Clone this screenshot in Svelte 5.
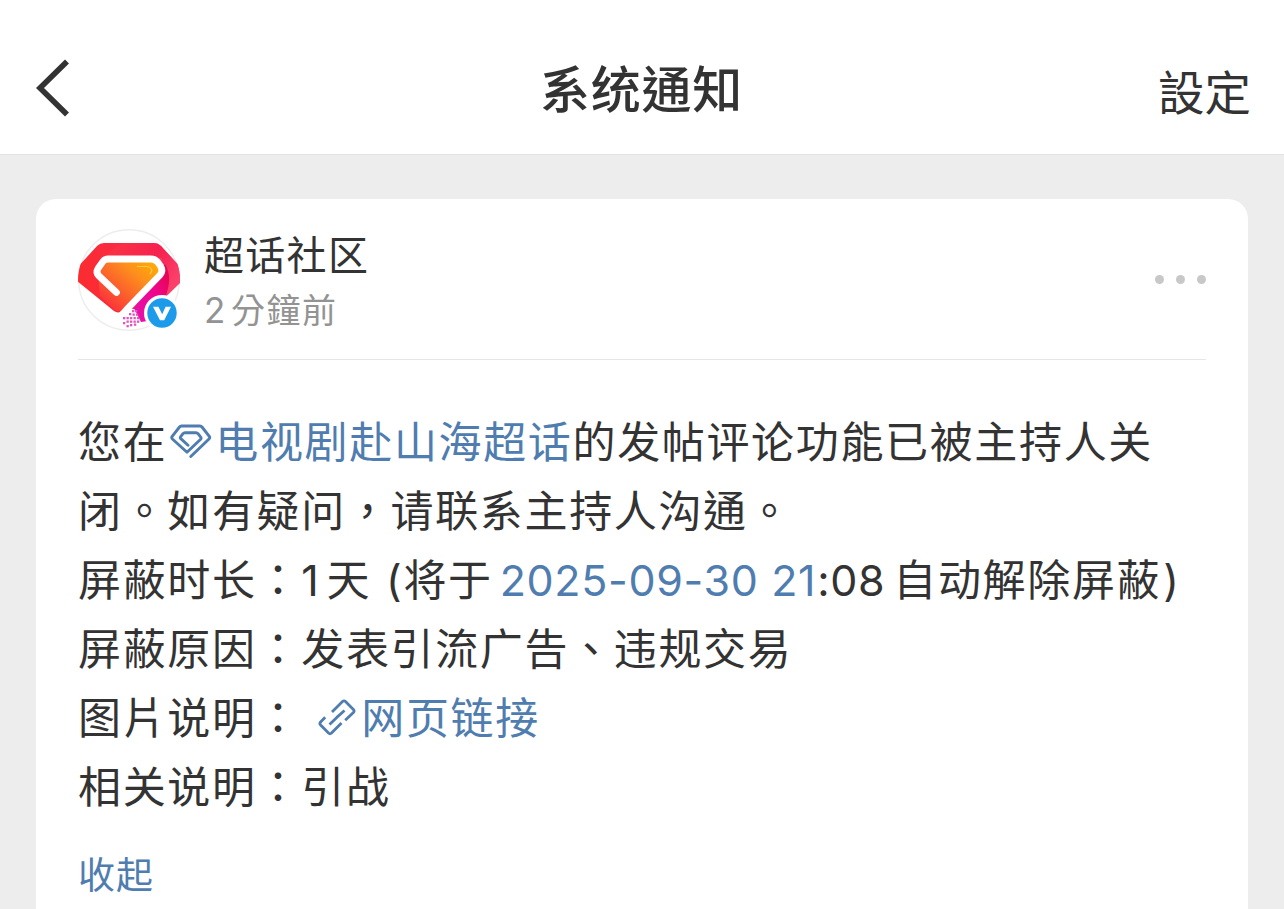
<script>
    const title = "系统通知";
    const account = { name: "超话社区", minutes: 2 };

    let expanded = true;

    // little squares where the logo dissolves at the bottom
    const pixels = [
        [62, 90], [65, 90], [59, 93], [62.5, 93.5], [66, 93.5],
        [53, 97], [56.5, 97], [60, 97], [63.5, 97], [67, 97],
        [56.5, 100.5], [60, 100.5], [63.5, 100.5], [67, 100.5],
        [53, 102], [60, 104], [64, 103.500], [56.5, 105]
    ];
</script>

<header>
    <button class="back" aria-label="back">
        <svg width="36" height="60" viewBox="0 0 36 60">
            <path d="M33 3.5 L6 30 L33 56.5" fill="none" stroke="#333" stroke-width="5.6" />
        </svg>
    </button>
    <h1>{title}</h1>
    <button class="settings">設定</button>
</header>

<main>
    <article class="card">
        <div class="author">
            <div class="avatar">
                <svg width="102" height="102" viewBox="8 9 102 102">
                    <defs>
                        <clipPath id="round"><circle cx="59" cy="60" r="51" /></clipPath>
                        <linearGradient id="red" x1="0" y1="0.6" x2="1" y2="0.4">
                            <stop offset="0" stop-color="#fb2c2c" />
                            <stop offset="0.5" stop-color="#f92a44" />
                            <stop offset="1" stop-color="#fb4169" />
                        </linearGradient>
                        <linearGradient id="wing" x1="0" y1="0" x2="1" y2="0.5">
                            <stop offset="0" stop-color="#fb3543" />
                            <stop offset="0.6" stop-color="#f5214f" />
                            <stop offset="1" stop-color="#fb416b" />
                        </linearGradient>
                        <linearGradient id="gem" x1="1" y1="0" x2="0.15" y2="0.8">
                            <stop offset="0" stop-color="#ffb400" />
                            <stop offset="0.4" stop-color="#fd8f1c" />
                            <stop offset="1" stop-color="#fb3b38" />
                        </linearGradient>
                        <linearGradient id="pink" x1="1" y1="0" x2="0" y2="1">
                            <stop offset="0" stop-color="#e2063f" />
                            <stop offset="0.45" stop-color="#f0068c" />
                            <stop offset="1" stop-color="#e313b0" />
                        </linearGradient>
                    </defs>
                    <circle cx="59" cy="60" r="50.3" fill="#fff" stroke="#ededed" stroke-width="1.4" />
                    <g clip-path="url(#round)">
                        <path d="M27 26 Q30 23 34 23 H84 Q88 23 91 26 L113 50 V60 L80 92 L58 88 Q49 95 44 91 L6 60 V49 Z" fill="url(#red)" />
                        <path d="M37 36 C43 26 54 23 64 23 H84 Q88 23 91 26 L113 50 V60 L92 80 V38 Z" fill="url(#wing)" />
                        <path d="M95 44 C101 54 100 65 95 78 L78 101 L71 102 L64 88 Z" fill="url(#pink)" />
                        <path d="M38 41 H82 L91 51 L55 89 Q50 93 45 90 L30 76 L28 54 Z" fill="url(#gem)" />
                        <path d="M46.5 72.5 L29 56 Q25.5 52.5 28 48.5 L33 41.5 Q35 39 38 39 H81 Q85 39 87.5 42 L90.5 46 Q93.5 51 90 55 L58 88 Q55 92 50 96.5" fill="none" stroke="#fff" stroke-width="6.8" stroke-linecap="round" stroke-linejoin="round" />
                        <path d="M67 46.5 H77 Q80 46.5 81.5 49 Q82.5 51 80 54" fill="none" stroke="#ffd34d" stroke-width="1.2" opacity="0.8" />
                        {#each pixels as [x, y]}
                            <rect {x} {y} width="2.3" height="2.3" fill="#e653bf" />
                        {/each}
                    </g>
                </svg>
                <svg class="badge" width="36" height="36" viewBox="0 0 36 36">
                    <circle cx="18" cy="18" r="18" fill="#fff" />
                    <circle cx="18" cy="18" r="14.7" fill="#1c9bea" />
                    <path d="M9 11.8 H14.4 L18.2 19.2 L21.6 11.8 H27 L20.2 25.2 H16 Z" fill="#fff" />
                </svg>
            </div>
            <div class="info">
                <div class="name">{account.name}</div>
                <div class="time"><span class="num">{account.minutes}</span>分鐘前</div>
            </div>
            <button class="more" aria-label="more"><i></i><i></i><i></i></button>
        </div>

        <div class="content">
            <p>您在<a href="#topic"><svg class="gem" width="42" height="36" viewBox="0 0 42 36">
                <path
                    d="M20.8 32.5 L39 15 Q40.3 13.7 39.3 12.3 L32 3 Q31.200 2 30 2 H11.5 Q10.300 2 9.500 3 L2.200 12.300 Q1.200 13.700 2.400 15 L17 28.300 L30.600 15.300 Q31.500 14.300 30.700 13.200 L28 9.700 Q27.200 8.700 26 8.700 H15 Q13.800 8.700 13 9.700 L10.700 12.700 Q9.900 13.700 10.800 14.600 L18 21.300"
                    fill="none" stroke="#507daf" stroke-width="2.9" stroke-linejoin="round" stroke-linecap="round"
                />
            </svg>电视剧赴山海超话</a>的发帖评论功能已被主持人关</p>
            <p>闭。如有疑问，请联系主持人沟通。</p>
            <p>屏蔽时长：<span class="num one">1</span>天<span class="num open">(</span>将于<a class="num date" href="#date">2025-09-30 21</a><span class="num clock">:08</span>自动解除屏蔽<span class="num close">)</span></p>
            <p>屏蔽原因：发表引流广告、违规交易</p>
            <p>图片说明：<a class="link" href="#page"><svg class="chain" width="38" height="38" viewBox="0 0 38 38">
                <g fill="none" stroke="#507daf" stroke-width="2.8" stroke-linejoin="round">
                    <path d="M7.2 18.3 L2.6 23 Q1.2 24.5 2.6 26 L10.5 34 Q12 35.4 13.5 34 L23.5 24" />
                    <path d="M14 13 L24.5 2.6 Q26 1.2 27.5 2.6 L35.4 10.5 Q36.8 12 35.4 13.5 L27.2 21.3" />
                    <path d="M11.5 25.5 L18.8 18.5 M18.5 18.6 L26.5 11.5" />
                </g>
            </svg>网页链接</a></p>
            <p>相关说明：引战</p>
        </div>

        <button class="toggle" on:click={() => (expanded = !expanded)}>{expanded ? "收起" : "展開"}</button>
    </article>
</main>

<style>
    :global(body) {
        background: #ededed;
        overflow: hidden;
        font-family: "Noto Sans CJK TC", sans-serif;
        color: #333;
    }

    button {
        padding: 0;
        border: none;
        background: none;
        font-family: inherit;
        color: inherit;
        cursor: pointer;
    }

    a {
        color: #507daf;
        text-decoration: none;
    }

    svg {
        display: block;
    }

    header {
        box-sizing: border-box;
        height: 155px;
        padding: 22px 33px 0 34px;
        display: grid;
        grid-template-columns: 1fr auto 1fr;
        align-items: center;
        background: #fff;
        border-bottom: 1px solid #e3e3e3;
    }

    .back {
        justify-self: start;
    }

    h1 {
        margin: -4px 2px 0 0;
        font-size: 50px;
        font-weight: 500;
        letter-spacing: 0.8px;
        line-height: 70px;
    }

    .settings {
        justify-self: end;
        font-size: 46.5px;
        line-height: 70px;
        padding-top: 3px;
    }

    main {
        padding: 44px 36px 0;
    }

    .card {
        box-sizing: border-box;
        height: 730px;
        padding: 0 42px;
        background: #fff;
        border-radius: 20px;
    }

    .author {
        box-sizing: border-box;
        height: 161px;
        padding-top: 30px;
        display: flex;
        align-items: flex-start;
        border-bottom: 1px solid #e6e6e6;
    }

    .avatar {
        position: relative;
        width: 102px;
        height: 102px;
    }

    .badge {
        position: absolute;
        left: 66px;
        top: 66px;
    }

    .info {
        flex: 1;
        margin-top: -3px;
        padding-left: 24px;
    }

    .name {
        font-size: 40px;
        letter-spacing: 1.3px;
        line-height: 54px;
    }

    .time {
        padding-top: 2px;
        font-size: 34px;
        letter-spacing: 1.5px;
        line-height: 54px;
        color: #939393;
    }

    .time .num {
        margin-right: 5px;
        font-size: 35px;
    }

    .more {
        display: flex;
        gap: 12px;
        padding-top: 46px;
    }

    .more i {
        width: 9px;
        height: 9px;
        border-radius: 50%;
        background: #c8c8c8;
    }

    .content {
        padding-top: 45px;
        font-size: 43px;
        letter-spacing: 1.65px;
    }

    p {
        margin: 0;
        height: 69px;
        line-height: 69px;
        white-space: nowrap;
    }

    .num {
        font-family: Inter, sans-serif;
        line-height: 1;
        letter-spacing: 0.65px;
    }

    .gem {
        display: inline-block;
        margin: 0 3px;
        vertical-align: -2px;
    }

    .link {
        margin-left: 17px;
    }

    .chain {
        display: inline-block;
        margin: 0 5px 0 0;
        vertical-align: -3px;
    }

    .one {
        margin-right: 7px;
    }

    .open {
        margin: 0 1px 0 15px;
    }

    .date {
        margin-left: 7px;
    }

    .clock {
        margin: 0 8px 0 1px;
    }

    .close {
        margin-left: 2px;
    }

    .toggle {
        margin-top: 27px;
        font-size: 37px;
        letter-spacing: 1px;
        line-height: 54px;
        color: #507daf;
    }
</style>
